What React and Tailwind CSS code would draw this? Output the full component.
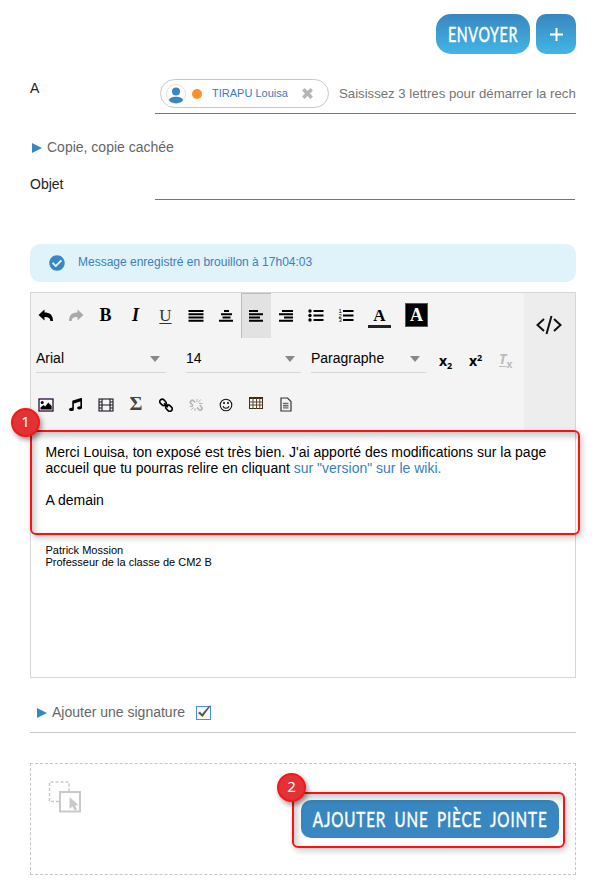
import React from "react";
import { FaMusic, FaCheckCircle } from "react-icons/fa";

function Bars({ rows }) {
  return (
    <svg width="16" height="12" viewBox="0 0 16 12">
      {rows.map(([x, w], i) => (
        <rect key={i} x={x} y={i * 3.25} width={w} height="2" />
      ))}
    </svg>
  );
}

const Justify = () => <Bars rows={[[0.5, 15], [0.5, 15], [0.5, 15], [0.5, 15]]} />;
const Center = () => <Bars rows={[[6, 5], [3, 11], [4.5, 8], [1, 14]]} />;
const Left = () => <Bars rows={[[1, 9], [1, 14], [1, 11], [1, 14]]} />;
const Right = () => <Bars rows={[[4, 11], [1, 14], [6, 9], [1, 14]]} />;

const Undo = ({ className }) => (
  <svg className={className} width="16" height="13" viewBox="0 0 16 13" fill="currentColor">
    <path d="M0.500 6L6.500 0.500V3.500C11.500 3.500 15 5.500 15 12H12.300C12.300 9 10.500 8 6.500 8V11.500z" />
  </svg>
);

const Bullets = () => (
  <svg width="16" height="13" viewBox="0 0 16 13">
    {[1, 5.5, 10].map((y) => (
      <g key={y}>
        <circle cx="2" cy={y + 1} r="1.7" />
        <rect x="5.5" y={y} width="10" height="2" />
      </g>
    ))}
  </svg>
);

const Numbers = () => (
  <svg width="16" height="15" viewBox="0 0 16 15">
    {[2, 6.5, 11].map((y, i) => (
      <g key={y}>
        <text x="0.5" y={y + 3} fontSize="6" fontFamily="Liberation Sans">{i + 1}</text>
        <rect x="5" y={y} width="10.500" height="2" />
      </g>
    ))}
  </svg>
);

const Picture = () => (
  <svg width="16" height="14" viewBox="0 0 16 14">
    <rect x="1" y="1" width="14" height="12" fill="#fff" stroke="#2b0d38" strokeWidth="1.3" />
    <circle cx="4.2" cy="4.4" r="1.5" />
    <path d="M2.500 11.500V9.500l3-2.500 1.700 1.600L10.300 4.500l3.400 3.600v3.400z" />
  </svg>
);

const Film = () => (
  <svg width="16" height="14" viewBox="0 0 16 14" fill="none" stroke="#1f1525" strokeWidth="1.1">
    <rect x="1" y="1" width="14" height="12" />
    <path d="M4 1v12M12 1v12M4 7h8M1 4h3M1 7h3M1 10h3M12 4h3M12 7h3M12 10h3" />
  </svg>
);

const Chain = () => (
  <svg width="14" height="14" viewBox="0 0 14 14" fill="none" stroke="#000" strokeWidth="1.600">
    <rect x="0.500" y="2" width="7" height="4.800" rx="2.400" transform="rotate(45 4 4.400)" />
    <rect x="6.500" y="7.700" width="7" height="4.800" rx="2.400" transform="rotate(45 10 10.100)" />
    <path d="M5 5.300l4 4" />
  </svg>
);

const Unlink = () => (
  <svg width="14" height="14" viewBox="0 0 14 14" fill="none" stroke="#b5b5b5">
    <path strokeWidth="1.7" d="M6.2 4.5 4.7 3a1.8 1.8 0 0 0-2.8 2.5L4 7.700M8 9.500l1.800 2a1.800 1.800 0 0 0 2.700-2.500L10.700 7.200" />
    <path d="M8 1v3M9.200 4.500l2.500-3M10 5.500h3.500M6 10v3M4.500 9.500 2 12M4 8.500H.5" />
  </svg>
);

const Smile = () => (
  <svg width="14" height="14" viewBox="0 0 14 14" fill="none" stroke="#111" strokeWidth="1.1">
    <circle cx="7" cy="7" r="5.800" />
    <path d="M4 8.300c1 2.600 5 2.600 6 0" />
    <path strokeWidth="1.600" d="M5 4v2M9 4v2" />
  </svg>
);

const Table = () => (
  <svg width="14" height="12" viewBox="0 0 14 12">
    <rect x=".5" y=".5" width="13" height="11" fill="#fff" stroke="#3a2a1a" />
    <rect width="14" height="2" fill="#3a2a1a" />
    <path d="M0 5h14M0 8h14M4 1v11M7.500 1v11M10.800 1v11" stroke="#5b4632" fill="none" />
  </svg>
);

const Doc = () => (
  <svg width="12" height="15" viewBox="0 0 12 15" fill="none" stroke="#333" strokeWidth="1.200">
    <path d="M1 1h6.500L11 4.500V14H1z" />
    <path stroke="#666" strokeWidth="1.400" d="M3 6.500h5.500M3 8.700h5.500M3 10.900h5.500" />
  </svg>
);

function Tool({ children, active }) {
  return (
    <div
      className={
        active
          ? "flex h-[45px] w-[30px] items-center justify-center border-l border-t border-[#bbb] bg-[#e2e2e2] pr-px"
          : "flex h-[45px] w-[30px] items-center justify-center pr-px"
      }
    >
      {children}
    </div>
  );
}

function Select({ label, className }) {
  return (
    <div className={"flex h-[30px] items-center justify-between border-b border-[#d6d6d6] pr-[6px] text-[14px] " + className}>
      <span className="pt-[2px]">{label}</span>
      <svg className="mt-[2px]" width="10" height="6" viewBox="0 0 10 6" fill="#888"><path d="M0 0h10L5 6z" /></svg>
    </div>
  );
}

const Caret = () => (
  <svg width="10" height="10" viewBox="0 0 10 10" fill="#3887c0"><path d="M0 0l10 5L0 10z" /></svg>
);

function Badge({ n, className }) {
  return (
    <div
      className={
        "absolute flex size-[29px] items-center justify-center rounded-full border-2 border-[#fb1414] bg-[#e23236] pb-[2px] text-[15px] leading-none text-white shadow-[2px_3px_5px_rgba(0,0,0,0.4)] font-['Noto_Sans'] " +
        className
      }
    >
      {n}
    </div>
  );
}

export default function App() {
  return (
    <div className="relative h-[887px] w-[604px] overflow-hidden bg-white pl-[30px] pr-[28px] font-['Liberation_Sans',sans-serif] text-[14px] text-[#222]">
      <header className="flex justify-end gap-[6px] pt-[14px]">
        <button className="flex h-10 w-[94px] items-center justify-center rounded-[15px] bg-linear-to-b from-[#3887c0] to-[#43b6e6] text-white">
          <span className="scale-x-[0.65] font-['Lato'] text-[22px] leading-none tracking-[1px] [-webkit-text-stroke:0.5px_white]">ENVOYER</span>
        </button>
        <button className="flex size-10 items-center justify-center rounded-[10px] bg-linear-to-b from-[#3887c0] to-[#43b6e6]">
          <svg width="13" height="13" viewBox="0 0 13 13" stroke="#fff" strokeWidth="2"><path d="M6.500 0v13M0 6.500h13" /></svg>
        </button>
      </header>

      <div className="mt-[20px] flex h-10">
        <div className="w-[125px] pt-[4px] leading-[20px]">A</div>
        <div className="flex w-[421px] border-b border-[#3887c0] pl-[5px] pt-[5px]">
          <div className="flex h-[29px] w-[169px] shrink-0 items-center rounded-full border border-[#c8c8c8] pl-[5px]">
            <svg className="mt-px" width="20" height="20" viewBox="0 0 20 20">
              <circle cx="10" cy="10" r="9.500" fill="#fff" stroke="#e2e2e2" />
              <circle cx="10" cy="7.500" r="4" fill="#3887c0" />
              <path d="M3 16.500c0-5 14-5 14 0-3 3.500-11 3.500-14 0z" fill="#3887c0" />
            </svg>
            <span className="ml-[6px] mt-px size-[10px] rounded-full bg-[#ff8f2e]" />
            <span className="ml-[10px] w-[90px] text-[11px] text-[#3a7cb5]">TIRAPU Louisa</span>
            <svg width="11" height="11" viewBox="0 0 11 11" stroke="#b5b5b5" strokeWidth="3.400"><path d="M1.300 1.300l8.400 8.400M9.700 1.300L1.300 9.700" /></svg>
          </div>
          <span className="ml-[10px] whitespace-nowrap pt-[6px] text-[13.200px] leading-[17px] text-[#757575]">Saisissez 3 lettres pour démarrer la rech</span>
        </div>
      </div>

      <div className="mt-[25px] flex h-[17px] items-center gap-[5px] pl-[2px] text-[14px] text-[#666]">
        <Caret />
        <span>Copie, copie cachée</span>
      </div>

      <div className="mt-[16px] flex h-[28px]">
        <div className="w-[125px] pt-[2px] leading-[21px]">Objet</div>
        <div className="w-[420px] border-b border-[#3887c0]" />
      </div>

      <div className="mt-[44px] flex h-[38px] items-center rounded-[10px] bg-[#e0f3fb] pl-[19px] text-[12px] text-[#3a80ba]">
        <FaCheckCircle size={16} className="text-[#3887c0]" />
        <span className="ml-[13px] pb-[2px]">Message enregistré en brouillon à 17h04:03</span>
      </div>

      <section className="mt-[10px] h-[386px] border border-[#d6d6d6] text-black">
        <div className="flex h-[137px] bg-[#f4f4f4]">
          <div className="w-[493px]">
            <div className="flex">
              <Tool><Undo /></Tool>
              <Tool><Undo className="-scale-x-100 text-[#aaa]" /></Tool>
              <Tool><span className="font-['Liberation_Serif'] text-[18px] font-bold">B</span></Tool>
              <Tool><span className="font-['Liberation_Serif'] text-[18px] font-bold italic">I</span></Tool>
              <Tool><span className="font-['Liberation_Serif'] text-[17px] text-[#333] underline underline-offset-2">U</span></Tool>
              <Tool><Justify /></Tool>
              <Tool><Center /></Tool>
              <Tool active><Left /></Tool>
              <Tool><Right /></Tool>
              <Tool><Bullets /></Tool>
              <Tool><Numbers /></Tool>
              <div className="ml-[7px] mt-[12px] flex h-[23px] w-[23px] items-center justify-center border-b-[3px] border-[#222] font-['Liberation_Serif'] text-[17px] font-bold leading-none">A</div>
              <div className="ml-[14px] mt-[10px] flex h-6 w-[23px] items-center justify-center border border-[#555] bg-black font-['Liberation_Serif'] text-[18px] font-bold leading-none text-white">A</div>
            </div>
            <div className="mt-[5px] flex h-[39px] pl-[5px]">
              <Select label="Arial" className="w-[130px]" />
              <Select label="14" className="ml-5 w-[115px]" />
              <Select label="Paragraphe" className="ml-[10px] w-[115px]" />
              <div className="flex h-[36px] items-center font-['Open_Sans'] text-[14px] font-bold leading-none">
                <div className="ml-[13px] w-[30px]">x<span className="relative top-[3px] text-[9px]">2</span></div>
                <div className="w-[30px]">x<span className="relative -top-[5px] text-[9px]">2</span></div>
                <div className="pb-[4px] text-[#bbb]"><span className="italic underline underline-offset-2">T</span><span className="relative top-[4px] text-[10px]">x</span></div>
              </div>
            </div>
            <div className="flex">
              <Tool><Picture /></Tool>
              <Tool><FaMusic size={13} /></Tool>
              <Tool><Film /></Tool>
              <Tool><span className="scale-x-110 pb-[2px] font-['Liberation_Serif'] text-[18px] font-bold leading-none text-[#444]">Σ</span></Tool>
              <Tool><Chain /></Tool>
              <Tool><Unlink /></Tool>
              <Tool><Smile /></Tool>
              <Tool><span className="pb-[4px]"><Table /></span></Tool>
              <Tool><Doc /></Tool>
            </div>
          </div>
          <div className="flex flex-1 justify-center bg-[#ededed] pr-px pt-[22px]">
            <svg width="26" height="20" viewBox="0 0 26 20" fill="none" stroke="#111" strokeWidth="2"><path d="M8 4L1.500 10 8 16M18 4l6.500 6L18 16M15.500 1l-5 18" /></svg>
          </div>
        </div>
        <div className="px-[14.500px] pt-[14px] text-[14px] leading-4">
          <p className="whitespace-nowrap">Merci Louisa, ton exposé est très bien. J'ai apporté des modifications sur la page</p>
          <p>accueil que tu pourras relire en cliquant <span className="text-[#3a80ba]">sur "version" sur le wiki.</span></p>
          <p className="mt-4">A demain</p>
          <div className="mt-[36px] text-[11px] leading-3">
            <p>Patrick Mossion</p>
            <p>Professeur de la classe de CM2 B</p>
          </div>
        </div>
      </section>

      <div className="flex h-[55px] items-center border-b border-[#c9c9c9] pl-[7px] pt-[15px] text-[14px] text-[#666]">
        <Caret />
        <span className="ml-[5px]">Ajouter une signature</span>
        <svg className="ml-[10px]" width="18" height="16" viewBox="0 0 18 16">
          <rect x="1.500" y="1.500" width="14" height="13" fill="#fbfbe9" stroke="#4b8df8" />
          <path d="M3 8l2-1.500L7 9l7-8 2-.5L7.500 12z" fill="#555" />
        </svg>
      </div>

      <div className="mt-[30px] flex h-[112px] justify-between border border-dashed border-[#c6c6c6] pl-[17px] pr-4 pt-[17px]">
        <svg width="34" height="32" viewBox="0 0 34 32" fill="none" stroke="#c9c9c9">
          <path strokeWidth="1.500" strokeDasharray="3 2" d="M11 20.500H1.500V1H21v9" />
          <rect x="12" y="11" width="20" height="19.500" strokeWidth="2" />
          <path fill="#c9c9c9" stroke="none" d="M21.500 16v12l3-2.500 2 4 2.500-1-2-4 3.500-.5z" />
        </svg>
        <button className="mt-[19px] flex h-[38px] w-[258px] items-center justify-center rounded-[10px] bg-[#3887c0] text-white">
          <span className="scale-x-[0.69] whitespace-nowrap font-['Lato'] text-[22px] leading-none tracking-[1.300px] [word-spacing:5px] [-webkit-text-stroke:0.5px_white]">AJOUTER UNE PIÈCE JOINTE</span>
        </button>
      </div>

      <div className="absolute left-[30px] top-[430px] h-[105px] w-[550px] rounded-[6px] border-2 border-[#f81313] shadow-[2px_3px_6px_rgba(0,0,0,0.2),inset_3px_4px_7px_rgba(0,0,0,0.22)]" />
      <Badge n="1" className="left-[11px] top-[408px]" />
      <div className="absolute left-[292px] top-[792px] h-[56px] w-[273px] rounded-[6px] border-2 border-[#f81313] shadow-[2px_3px_6px_rgba(0,0,0,0.2),inset_3px_4px_7px_rgba(0,0,0,0.22)]" />
      <Badge n="2" className="left-[277px] top-[773px]" />
    </div>
  );
}
